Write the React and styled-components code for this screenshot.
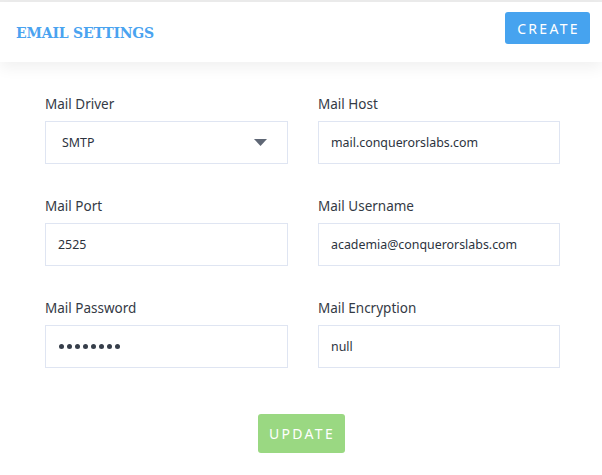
import React from "react";
import styled, { createGlobalStyle } from "styled-components";

const Global = createGlobalStyle`
  html, body { margin: 0; padding: 0; background: #fff; }
  body { font-family: "Noto Sans", "Open Sans", sans-serif; }
  * { box-sizing: border-box; }
`;

const Page = styled.div`
  width: 602px;
  min-height: 475px;
  background: #fff;
  border-top: 2px solid #ececec;
`;

const Header = styled.header`
  height: 60px;
  display: flex;
  align-items: flex-start;
  justify-content: space-between;
  padding: 0 12px 0 16px;
  background: #fff;
  box-shadow: 0 6px 14px rgba(0, 0, 0, 0.06);
  position: relative;
`;

const Title = styled.h1`
  margin: 21px 0 0;
  font-family: "DejaVu Serif", "Liberation Serif", serif;
  font-weight: 700;
  font-size: 14px;
  line-height: 20px;
  color: #4aa3f0;
  letter-spacing: -0.2px;
`;

const Button = styled.button`
  border: none;
  border-radius: 3px;
  color: #fff;
  font-family: "Noto Sans", sans-serif;
  font-size: 14px;
  letter-spacing: 2.3px;
  text-transform: uppercase;
  cursor: pointer;
  background: ${(p) => p.$bg};
  width: ${(p) => p.$w}px;
  height: ${(p) => p.$h}px;
  padding: 0 0 0 2px;
`;

const CreateButton = styled(Button)`
  margin-top: 10px;
`;

const Form = styled.form`
  padding: 33px 42px 0 45px;
`;

const Grid = styled.div`
  display: grid;
  grid-template-columns: 243px 242px;
  column-gap: 30px;
  row-gap: 33px;
`;

const Field = styled.div`
  display: flex;
  flex-direction: column;
  gap: 8px;
`;

const Label = styled.label`
  font-size: 13.5px;
  line-height: 18px;
  color: #343a45;
`;

const Box = styled.div`
  height: 43px;
  border: 1px solid #dfe5f2;
  display: flex;
  align-items: center;
  justify-content: space-between;
  padding: 0 ${(p) => p.$pr || 12}px 0 ${(p) => p.$pl || 12}px;
  font-size: 12.4px;
  color: #2c333e;
  background: #fff;
`;

const Caret = styled.svg`
  width: 13px;
  height: 7px;
  display: block;
`;

const Dots = styled.span`
  display: flex;
  gap: 3px;
`;

const Dot = styled.i`
  width: 5px;
  height: 5px;
  border-radius: 50%;
  background: #363e4a;
`;

const Actions = styled.div`
  display: flex;
  justify-content: center;
  padding: 46px 0 20px;
  margin-left: -3px;
`;

function Input({ children, pl }) {
  return <Box $pl={pl}>{children}</Box>;
}

export default function App() {
  return (
    <Page>
      <Global />
      <Header>
        <Title>EMAIL SETTINGS</Title>
        <CreateButton type="button" $bg="#46a3ef" $w={85} $h={32}>
          Create
        </CreateButton>
      </Header>
      <Form onSubmit={(e) => e.preventDefault()}>
        <Grid>
          <Field>
            <Label>Mail Driver</Label>
            <Box $pl={16} $pr={20}>
              <span>SMTP</span>
              <Caret viewBox="0 0 13 7">
                <path d="M0 0 H13 L6.5 7 Z" fill="#5f6775" />
              </Caret>
            </Box>
          </Field>
          <Field>
            <Label>Mail Host</Label>
            <Input>mail.conquerorslabs.com</Input>
          </Field>
          <Field>
            <Label>Mail Port</Label>
            <Input>2525</Input>
          </Field>
          <Field>
            <Label>Mail Username</Label>
            <Input>academia@conquerorslabs.com</Input>
          </Field>
          <Field>
            <Label>Mail Password</Label>
            <Input pl={13}>
              <Dots>
                {Array.from({ length: 8 }, (_, i) => (
                  <Dot key={i} />
                ))}
              </Dots>
            </Input>
          </Field>
          <Field>
            <Label>Mail Encryption</Label>
            <Input>null</Input>
          </Field>
        </Grid>
        <Actions>
          <Button type="submit" $bg="#9ad882" $w={87} $h={39}>
            Update
          </Button>
        </Actions>
      </Form>
    </Page>
  );
}
